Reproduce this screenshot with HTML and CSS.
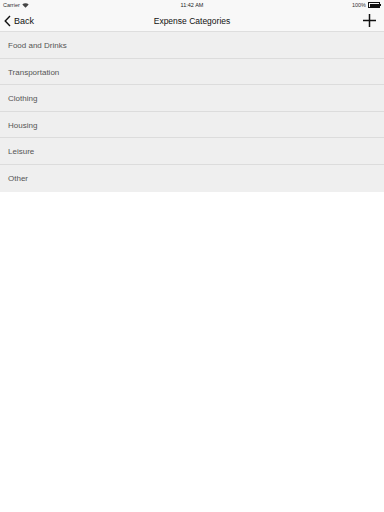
FILE: index.html
```html
<!DOCTYPE html>
<html lang="en">
<head>
    <meta charset="UTF-8">
    <meta name="viewport" content="width=device-width, initial-scale=1.0">
    <title>Expense Categories</title>
    <link rel="stylesheet" href="styles.css">
</head>
<body>
<div class="status-bar">
    <div class="carrier">Carrier
        <svg class="wifi" width="7" height="5" viewBox="0 0 7 5">
            <path d="M0.3 1.6 A4.5 4.5 0 0 1 6.7 1.6 L3.5 4.8 Z" fill="#444"/>
        </svg>
    </div>
    <div class="time">11:42 AM</div>
    <div class="battery">100%
        <span class="battery-body"><span class="battery-level"></span></span><span class="battery-tip"></span>
    </div>
</div>

<div class="nav-bar">
    <div class="back">
        <svg width="7" height="12" viewBox="0 0 7 12">
            <path d="M6 1 L1.2 6 L6 11" fill="none" stroke="#111" stroke-width="1.4"/>
        </svg>
        <span>Back</span>
    </div>
    <div class="title">Expense Categories</div>
    <div class="add">
        <svg width="13" height="13" viewBox="0 0 13 13">
            <path d="M6.5 0 V13 M0 6.5 H13" stroke="#111" stroke-width="1.5"/>
        </svg>
    </div>
</div>

<ul class="category-list">
    <li>Food and Drinks</li>
    <li>Transportation</li>
    <li>Clothing</li>
    <li>Housing</li>
    <li>Leisure</li>
    <li>Other</li>
</ul>
</body>
</html>
```

FILE: styles.css
```css
body {
    margin: 0;
    font-family: "Liberation Sans", Arial, sans-serif;
    background-color: #ffffff;
    color: #111;
}
.status-bar {
    height: 10px;
    display: flex;
    justify-content: space-between;
    align-items: center;
    padding: 0 3px;
    font-size: 5.5px;
    background-color: #f8f8f8;
    position: relative;
}
.carrier {
    display: flex;
    align-items: center;
    gap: 2px;
    color: #333;
}
.time {
    position: absolute;
    left: 0;
    right: 0;
    text-align: center;
    color: #222;
}
.battery {
    display: flex;
    align-items: center;
    gap: 2px;
    color: #333;
}
.battery-body {
    display: inline-block;
    width: 9px;
    height: 3px;
    border: 0.5px solid #111;
    padding: 0.5px;
}
.battery-level {
    display: block;
    width: 100%;
    height: 100%;
    background-color: #111;
}
.battery-tip {
    display: inline-block;
    width: 1px;
    height: 2px;
    background-color: #111;
    margin-left: -2px;
}
.nav-bar {
    height: 21px;
    display: flex;
    align-items: center;
    justify-content: space-between;
    padding: 0 8px 0 4px;
    background-color: #f8f8f8;
    border-bottom: 1px solid #dedede;
    position: relative;
}
.back {
    display: flex;
    align-items: center;
    gap: 3px;
    font-size: 9px;
}
.title {
    position: absolute;
    left: 0;
    right: 0;
    text-align: center;
    font-size: 8.5px;
    pointer-events: none;
}
.add {
    display: flex;
}
.category-list {
    list-style: none;
    margin: 0;
    padding: 0;
    background-color: #efefef;
}
.category-list li {
    height: 26.6px;
    line-height: 27px;
    padding-left: 8px;
    font-size: 8px;
    color: #555;
    border-bottom: 0.5px solid #dcdcdc;
    box-sizing: border-box;
}
.category-list li:last-child {
    border-bottom: none;
}
```
